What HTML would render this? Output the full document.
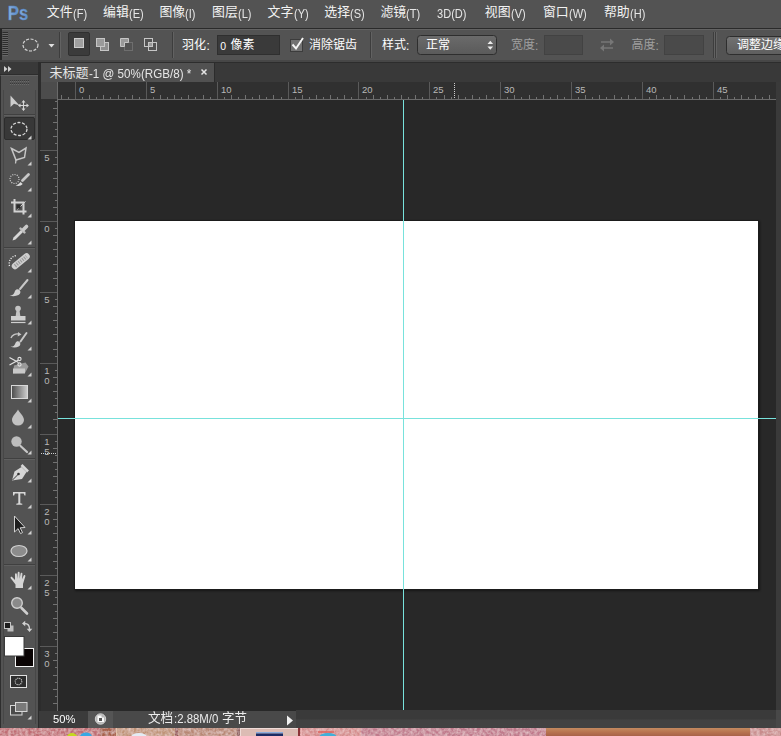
<!DOCTYPE html>
<html lang="zh-CN"><head><meta charset="utf-8"><title>Photoshop</title>
<style>
*{margin:0;padding:0;box-sizing:border-box}
html,body{width:781px;height:736px;overflow:hidden;background:#282828}
body{font-family:"Liberation Sans",sans-serif}
#app{position:relative;width:781px;height:736px;overflow:hidden;background:#282828}
.abs,.g,.a,.b{position:absolute}
.g{overflow:visible}
.a{white-space:nowrap;line-height:1;font-family:"Liberation Sans",sans-serif}
.a.cj{font-family:"Liberation Sans","Noto Sans CJK SC",sans-serif}
.rl text{font-family:"Liberation Sans",sans-serif;font-size:9.5px;fill:#b8b8b8}

</style></head>
<body>
<div id="app">
<!-- menu bar -->
<div class="b" style="left:0;top:0;width:781px;height:28px;background:#535353"></div>
<div class="b" style="left:0;top:28px;width:781px;height:1px;background:#2a2a2a"></div>
<!-- options bar -->
<div class="b" style="left:0;top:29px;width:781px;height:31px;background:#535353;border-top:1px solid #636363"></div>
<div class="b" style="left:0;top:29px;width:2px;height:31px;background:#262626"></div>
<div class="b" style="left:0;top:60px;width:781px;height:2px;background:#474747"></div>
<!-- tab bar -->
<div class="b" style="left:0;top:62px;width:781px;height:20px;background:#393939;border-top:1px solid #2d2d2d"></div>
<div class="b" style="left:41px;top:63px;width:174px;height:19px;background:#515151;border-right:1px solid #2c2c2c"></div>
<!-- rulers -->
<div class="b" style="left:40px;top:82px;width:736px;height:18px;background:#303030;border-bottom:1px solid #6a6a6a"></div>
<div class="b" style="left:40px;top:82px;width:18px;height:629px;background:#303030;border-right:1px solid #6a6a6a"></div>
<div class="b" style="left:40px;top:82px;width:17px;height:17px;background:#4c4c4c"></div>
<!-- right scroll strip -->
<div class="b" style="left:776px;top:82px;width:5px;height:645px;background:#3a3a3a"></div>
<!-- document -->
<div class="b" style="left:75px;top:221px;width:683px;height:368px;background:#fff;box-shadow:0 0 0 1px #1b1b1b,1px 1px 2px 1px rgba(0,0,0,.45)"></div>
<!-- guides -->
<div class="b" style="left:403px;top:100px;width:1px;height:610px;background:#78e2dc"></div>
<div class="b" style="left:58px;top:418px;width:718px;height:1px;background:#78e2dc"></div>
<!-- toolbar -->
<div class="b" style="left:0;top:62px;width:41px;height:666px;background:#2c2c2c"></div>
<div class="b" style="left:0;top:62px;width:38px;height:13px;background:#393939;border-bottom:1px solid #2d2d2d"></div>
<div class="b" style="left:0;top:75px;width:38px;height:653px;background:#535353;border-left:1px solid #2e2e2e;border-top:1px solid #606060"></div>
<!-- status bar -->
<div class="b" style="left:39px;top:711px;width:742px;height:17px;background:#3b3b3b"></div>
<div class="b" style="left:296px;top:710px;width:485px;height:18px;background:linear-gradient(#3a3a3a 0,#3a3a3a 50%,#424242 55%,#424242 100%)"></div>
<div class="b" style="left:88px;top:711px;width:25px;height:17px;background:#555"></div>
<div class="b" style="left:113px;top:711px;width:183px;height:17px;background:#494949"></div>
<div class="b" style="left:776px;top:710px;width:5px;height:18px;background:#484848"></div>
<!-- taskbar -->
<div class="b" style="left:0;top:728px;width:781px;height:8px;background:#b87878"></div>

<svg class="abs" style="left:0;top:0" width="781" height="100" viewBox="0 0 781 100"><g fill="#727272"><rect x="61" y="95" width="1" height="4"/><rect x="68" y="97" width="1" height="2"/><rect x="75" y="82" width="1" height="17" fill="#5a5a5a"/><rect x="82" y="97" width="1" height="2"/><rect x="89" y="95" width="1" height="4"/><rect x="96" y="97" width="1" height="2"/><rect x="103" y="95" width="1" height="4"/><rect x="110" y="97" width="1" height="2"/><rect x="118" y="95" width="1" height="4"/><rect x="125" y="97" width="1" height="2"/><rect x="132" y="95" width="1" height="4"/><rect x="139" y="97" width="1" height="2"/><rect x="146" y="82" width="1" height="17" fill="#5a5a5a"/><rect x="153" y="97" width="1" height="2"/><rect x="160" y="95" width="1" height="4"/><rect x="167" y="97" width="1" height="2"/><rect x="174" y="95" width="1" height="4"/><rect x="181" y="97" width="1" height="2"/><rect x="188" y="95" width="1" height="4"/><rect x="195" y="97" width="1" height="2"/><rect x="203" y="95" width="1" height="4"/><rect x="210" y="97" width="1" height="2"/><rect x="217" y="82" width="1" height="17" fill="#5a5a5a"/><rect x="224" y="97" width="1" height="2"/><rect x="231" y="95" width="1" height="4"/><rect x="238" y="97" width="1" height="2"/><rect x="245" y="95" width="1" height="4"/><rect x="252" y="97" width="1" height="2"/><rect x="259" y="95" width="1" height="4"/><rect x="266" y="97" width="1" height="2"/><rect x="273" y="95" width="1" height="4"/><rect x="281" y="97" width="1" height="2"/><rect x="288" y="82" width="1" height="17" fill="#5a5a5a"/><rect x="295" y="97" width="1" height="2"/><rect x="302" y="95" width="1" height="4"/><rect x="309" y="97" width="1" height="2"/><rect x="316" y="95" width="1" height="4"/><rect x="323" y="97" width="1" height="2"/><rect x="330" y="95" width="1" height="4"/><rect x="337" y="97" width="1" height="2"/><rect x="344" y="95" width="1" height="4"/><rect x="351" y="97" width="1" height="2"/><rect x="358" y="82" width="1" height="17" fill="#5a5a5a"/><rect x="366" y="97" width="1" height="2"/><rect x="373" y="95" width="1" height="4"/><rect x="380" y="97" width="1" height="2"/><rect x="387" y="95" width="1" height="4"/><rect x="394" y="97" width="1" height="2"/><rect x="401" y="95" width="1" height="4"/><rect x="408" y="97" width="1" height="2"/><rect x="415" y="95" width="1" height="4"/><rect x="422" y="97" width="1" height="2"/><rect x="429" y="82" width="1" height="17" fill="#5a5a5a"/><rect x="436" y="97" width="1" height="2"/><rect x="444" y="95" width="1" height="4"/><rect x="451" y="97" width="1" height="2"/><rect x="458" y="95" width="1" height="4"/><rect x="465" y="97" width="1" height="2"/><rect x="472" y="95" width="1" height="4"/><rect x="479" y="97" width="1" height="2"/><rect x="486" y="95" width="1" height="4"/><rect x="493" y="97" width="1" height="2"/><rect x="500" y="82" width="1" height="17" fill="#5a5a5a"/><rect x="507" y="97" width="1" height="2"/><rect x="514" y="95" width="1" height="4"/><rect x="521" y="97" width="1" height="2"/><rect x="529" y="95" width="1" height="4"/><rect x="536" y="97" width="1" height="2"/><rect x="543" y="95" width="1" height="4"/><rect x="550" y="97" width="1" height="2"/><rect x="557" y="95" width="1" height="4"/><rect x="564" y="97" width="1" height="2"/><rect x="571" y="82" width="1" height="17" fill="#5a5a5a"/><rect x="578" y="97" width="1" height="2"/><rect x="585" y="95" width="1" height="4"/><rect x="592" y="97" width="1" height="2"/><rect x="599" y="95" width="1" height="4"/><rect x="606" y="97" width="1" height="2"/><rect x="614" y="95" width="1" height="4"/><rect x="621" y="97" width="1" height="2"/><rect x="628" y="95" width="1" height="4"/><rect x="635" y="97" width="1" height="2"/><rect x="642" y="82" width="1" height="17" fill="#5a5a5a"/><rect x="649" y="97" width="1" height="2"/><rect x="656" y="95" width="1" height="4"/><rect x="663" y="97" width="1" height="2"/><rect x="670" y="95" width="1" height="4"/><rect x="677" y="97" width="1" height="2"/><rect x="684" y="95" width="1" height="4"/><rect x="692" y="97" width="1" height="2"/><rect x="699" y="95" width="1" height="4"/><rect x="706" y="97" width="1" height="2"/><rect x="713" y="82" width="1" height="17" fill="#5a5a5a"/><rect x="720" y="97" width="1" height="2"/><rect x="727" y="95" width="1" height="4"/><rect x="734" y="97" width="1" height="2"/><rect x="741" y="95" width="1" height="4"/><rect x="748" y="97" width="1" height="2"/><rect x="755" y="95" width="1" height="4"/><rect x="762" y="97" width="1" height="2"/><rect x="769" y="95" width="1" height="4"/><path d="M454.500 83v16" stroke="#d0d0d0" stroke-dasharray="1 1" fill="none"/></g><g class="rl"><text x="79" y="92.8">0</text><text x="150" y="92.8">5</text><text x="221" y="92.8">10</text><text x="292" y="92.8">15</text><text x="362" y="92.8">20</text><text x="433" y="92.8">25</text><text x="504" y="92.8">30</text><text x="575" y="92.8">35</text><text x="646" y="92.8">40</text><text x="717" y="92.8">45</text></g></svg><svg class="abs" style="left:0;top:0" width="60" height="710" viewBox="0 0 60 710"><g fill="#727272"><rect x="55" y="101" width="2" height="1"/><rect x="53" y="108" width="4" height="1"/><rect x="55" y="115" width="2" height="1"/><rect x="53" y="122" width="4" height="1"/><rect x="55" y="129" width="2" height="1"/><rect x="53" y="136" width="4" height="1"/><rect x="55" y="143" width="2" height="1"/><rect x="40" y="150" width="17" height="1" fill="#5a5a5a"/><rect x="55" y="157" width="2" height="1"/><rect x="53" y="164" width="4" height="1"/><rect x="55" y="171" width="2" height="1"/><rect x="53" y="178" width="4" height="1"/><rect x="55" y="186" width="2" height="1"/><rect x="53" y="193" width="4" height="1"/><rect x="55" y="200" width="2" height="1"/><rect x="53" y="207" width="4" height="1"/><rect x="55" y="214" width="2" height="1"/><rect x="40" y="221" width="17" height="1" fill="#5a5a5a"/><rect x="55" y="228" width="2" height="1"/><rect x="53" y="235" width="4" height="1"/><rect x="55" y="242" width="2" height="1"/><rect x="53" y="249" width="4" height="1"/><rect x="55" y="256" width="2" height="1"/><rect x="53" y="264" width="4" height="1"/><rect x="55" y="271" width="2" height="1"/><rect x="53" y="278" width="4" height="1"/><rect x="55" y="285" width="2" height="1"/><rect x="40" y="292" width="17" height="1" fill="#5a5a5a"/><rect x="55" y="299" width="2" height="1"/><rect x="53" y="306" width="4" height="1"/><rect x="55" y="313" width="2" height="1"/><rect x="53" y="320" width="4" height="1"/><rect x="55" y="327" width="2" height="1"/><rect x="53" y="334" width="4" height="1"/><rect x="55" y="341" width="2" height="1"/><rect x="53" y="349" width="4" height="1"/><rect x="55" y="356" width="2" height="1"/><rect x="40" y="363" width="17" height="1" fill="#5a5a5a"/><rect x="55" y="370" width="2" height="1"/><rect x="53" y="377" width="4" height="1"/><rect x="55" y="384" width="2" height="1"/><rect x="53" y="391" width="4" height="1"/><rect x="55" y="398" width="2" height="1"/><rect x="53" y="405" width="4" height="1"/><rect x="55" y="412" width="2" height="1"/><rect x="53" y="419" width="4" height="1"/><rect x="55" y="427" width="2" height="1"/><rect x="40" y="434" width="17" height="1" fill="#5a5a5a"/><rect x="55" y="441" width="2" height="1"/><rect x="53" y="448" width="4" height="1"/><rect x="55" y="455" width="2" height="1"/><rect x="53" y="462" width="4" height="1"/><rect x="55" y="469" width="2" height="1"/><rect x="53" y="476" width="4" height="1"/><rect x="55" y="483" width="2" height="1"/><rect x="53" y="490" width="4" height="1"/><rect x="55" y="497" width="2" height="1"/><rect x="40" y="504" width="17" height="1" fill="#5a5a5a"/><rect x="55" y="512" width="2" height="1"/><rect x="53" y="519" width="4" height="1"/><rect x="55" y="526" width="2" height="1"/><rect x="53" y="533" width="4" height="1"/><rect x="55" y="540" width="2" height="1"/><rect x="53" y="547" width="4" height="1"/><rect x="55" y="554" width="2" height="1"/><rect x="53" y="561" width="4" height="1"/><rect x="55" y="568" width="2" height="1"/><rect x="40" y="575" width="17" height="1" fill="#5a5a5a"/><rect x="55" y="582" width="2" height="1"/><rect x="53" y="590" width="4" height="1"/><rect x="55" y="597" width="2" height="1"/><rect x="53" y="604" width="4" height="1"/><rect x="55" y="611" width="2" height="1"/><rect x="53" y="618" width="4" height="1"/><rect x="55" y="625" width="2" height="1"/><rect x="53" y="632" width="4" height="1"/><rect x="55" y="639" width="2" height="1"/><rect x="40" y="646" width="17" height="1" fill="#5a5a5a"/><rect x="55" y="653" width="2" height="1"/><rect x="53" y="660" width="4" height="1"/><rect x="55" y="667" width="2" height="1"/><rect x="53" y="675" width="4" height="1"/><rect x="55" y="682" width="2" height="1"/><rect x="53" y="689" width="4" height="1"/><rect x="55" y="696" width="2" height="1"/><rect x="53" y="703" width="4" height="1"/><path d="M41 453.500h16" stroke="#d0d0d0" stroke-dasharray="1 1" fill="none"/></g><g class="rl"><text x="44.2" y="161">5</text><text x="44.2" y="232">0</text><text x="44.2" y="303">5</text><text x="44.2" y="374">1</text><text x="44.2" y="384">0</text><text x="44.2" y="445">1</text><text x="44.2" y="455">5</text><text x="44.2" y="515">2</text><text x="44.2" y="525">0</text><text x="44.2" y="586">2</text><text x="44.2" y="596">5</text><text x="44.2" y="657">3</text><text x="44.2" y="667">0</text></g></svg>
<svg class="abs" style="left:0;top:0" width="42" height="736" viewBox="0 0 42 736" fill="none">
<defs>
<linearGradient id="gr" x1="0" x2="1" y1="0" y2="0"><stop offset="0" stop-color="#4a4a4a"/><stop offset="1" stop-color="#cfcfcf"/></linearGradient>
</defs>
<!-- collapse arrows -->
<path d="M4 66l3.500 3L4 72zM8 66l3.500 3L8 72z" fill="#cfcfcf"/>
<!-- grip -->
<g stroke="#3a3a3a" stroke-width="1"><path d="M10 80.500h20M10 83.500h20" stroke-dasharray="1 1"/></g>
<g stroke="#6a6a6a" stroke-width="1"><path d="M10 81.500h20M10 84.500h20" stroke-dasharray="1 1"/></g>
<!-- separators -->
<g stroke="#404040"><path d="M4 114.500h31M4 247.500h31M4 458.500h31M4 564.500h31"/></g>
<g stroke="#5f5f5f"><path d="M4 115.500h31M4 248.500h31M4 459.500h31M4 565.500h31"/></g>
<path d="M3.500 90v634M35.500 90v634" stroke="#474747"/>
<!-- selected tool bg -->
<rect x="4.500" y="117.500" width="30" height="22" rx="1.500" fill="#383838" stroke="#2c2c2c"/>
<!-- flyout triangles -->
<g fill="#d0d0d0">
<path d="M31.500 135.500v4h-4z"/><path d="M31.500 161.500v4h-4z"/><path d="M31.500 187.500v4h-4z"/><path d="M31.500 213.500v4h-4z"/><path d="M31.500 240.500v4h-4z"/>
<path d="M31.500 268.500v4h-4z"/><path d="M31.500 294.500v4h-4z"/><path d="M31.500 320.500v4h-4z"/><path d="M31.500 346.500v4h-4z"/><path d="M31.500 372.500v4h-4z"/><path d="M31.500 398.500v4h-4z"/><path d="M31.500 424.500v4h-4z"/><path d="M31.500 450.500v4h-4z"/>
<path d="M31.500 478.500v4h-4z"/><path d="M31.500 504.500v4h-4z"/><path d="M31.500 530.500v4h-4z"/><path d="M31.500 557.500v4h-4z"/>
<path d="M31.500 585.500v4h-4z"/><path d="M31.500 715.500v4h-4z"/>
</g>
<!-- 1 move -->
<path d="M10.500 95.500v11.500l3.500-3.200 5.500 1.700z" fill="#cdcdcd"/>
<path d="M23.500 101.500v8M19.500 105.500h8" stroke="#d6d6d6" stroke-width="1.100"/>
<path d="M23.500 100l-2 2.500h4zM23.500 111l-2-2.500h4zM18 105.500l2.500-2v4zM29 105.500l-2.500-2v4z" fill="#d6d6d6"/>
<!-- 2 ellipse marquee -->
<ellipse cx="19" cy="129" rx="8" ry="6.500" stroke="#d8d8d8" stroke-width="1.300" stroke-dasharray="3 1.600"/>
<!-- 3 polygonal lasso -->
<path d="M11.500 148.500l7.500 4 7-4.500-1.500 9.500-8.500 2.500z" stroke="#c6c6c6" stroke-width="1.500" stroke-linejoin="miter"/>
<path d="M16 160l-.5 3.500" stroke="#c6c6c6" stroke-width="1.300"/>
<!-- 4 quick selection -->
<circle cx="14.500" cy="179" r="4.500" stroke="#d0d0d0" stroke-width="1.200" stroke-dasharray="1 1.300"/>
<path d="M28.500 174.500l-6 6" stroke="#c8c8c8" stroke-width="2.800" stroke-linecap="round"/>
<path d="M15.500 185.500c2-.3 3.600-1.600 5-3.500l2.200 2c-1.500 1.700-4 2.500-7.200 1.500z" fill="#dcdcdc"/>
<!-- 5 crop -->
<path d="M14.500 199v12.500h12M11 202.500h12.500v12" stroke="#d2d2d2" stroke-width="2"/>
<path d="M17.500 209.500l8-8" stroke="#cfcfcf" stroke-width="1"/>
<rect x="16.500" y="204.500" width="4" height="4" fill="#2c2c2c"/>
<!-- 6 eyedropper -->
<path d="M12.500 240.500l1-3 8-8 2 2-8 8z" fill="#d6d6d6"/>
<path d="M20.500 228.500l4 4" stroke="#bdbdbd" stroke-width="2.400" stroke-linecap="round"/>
<path d="M23.500 229.500l3-3" stroke="#c9c9c9" stroke-width="3.600" stroke-linecap="round"/>
<!-- 7 spot healing -->
<path d="M15 266l11.500-9.500" stroke="#cfcfcf" stroke-width="6.500" stroke-linecap="round"/>
<path d="M15 266l11.500-9.500" stroke="#9a9a9a" stroke-width="3.600" stroke-linecap="butt" stroke-dasharray="1.200 1.200"/>
<path d="M9.500 266c-1-4 .5-9 6.500-10.500" stroke="#f0f0f0" stroke-width="1.300" stroke-dasharray="1.200 1.300"/>
<!-- 8 brush -->
<path d="M27.500 280l-7.500 9" stroke="#c8c8c8" stroke-width="2" stroke-linecap="round"/>
<path d="M9.500 295.500c3 .2 4.500-1.300 5.500-4.500 1-2.200 3.500-2.200 4.700-.7 1.300 1.600.8 3.600-1.200 4.800-2.800 1.500-6.500 1.400-9 .4z" fill="#d0d0d0"/>
<!-- 9 stamp -->
<circle cx="18" cy="308.500" r="2.800" fill="#c4c4c4"/>
<path d="M16.500 310h3l.8 6h-4.600z" fill="#c4c4c4"/>
<rect x="11" y="316" width="14.500" height="4.500" fill="#cfcfcf"/>
<path d="M11 322.500h14.500" stroke="#cfcfcf" stroke-width="1.200"/>
<!-- 10 history brush -->
<path d="M26.500 333l-6 8.500" stroke="#c8c8c8" stroke-width="2" stroke-linecap="round"/>
<path d="M10.500 346.500c2.800.2 4.200-1 5-3.600.9-2 3.100-2 4.200-.7 1.200 1.500.7 3.300-1.100 4.300-2.500 1.300-5.800 1.100-8.100 0z" fill="#d0d0d0"/>
<path d="M11 338c1-3 4.500-5 8.500-3.800" stroke="#c6c6c6" stroke-width="1.400"/>
<path d="M18 332l3.500 2.500-3.800 2z" fill="#c6c6c6"/>
<!-- 11 background eraser -->
<path d="M14 365.500l11.500-3 3 4-3.500 6.500-12 .5z" fill="#9a9a9a"/>
<path d="M13 368.500h12v5h-12z" fill="#c8c8c8"/>
<path d="M9.500 357.500l9 5M9.500 365l9-5" stroke="#e2e2e2" stroke-width="1.300"/>
<circle cx="19.500" cy="359" r="1.600" stroke="#e2e2e2" stroke-width="1.100"/><circle cx="19.500" cy="364.500" r="1.600" stroke="#e2e2e2" stroke-width="1.100"/>
<!-- 12 gradient -->
<rect x="11.500" y="385.500" width="16" height="13" fill="url(#gr)" stroke="#d8d8d8"/>
<!-- 13 blur -->
<path d="M18 409.500c1.500 3.500 6 6.500 6 10.500a6 5.500 0 0 1-12 0c0-4 4.500-7 6-10.500z" fill="#c2c2c2"/>
<!-- 14 dodge -->
<circle cx="16.500" cy="441.500" r="5.200" fill="#bdbdbd"/>
<path d="M20.500 446l6.500 6" stroke="#c8c8c8" stroke-width="2.200" stroke-linecap="round"/>
<!-- 15 pen -->
<path d="M12 480.500l2.500-9 7-4.500 5 5-4.500 7z" fill="#d6d6d6"/>
<path d="M21.500 465l6.500 6.500" stroke="#d6d6d6" stroke-width="2.600"/>
<path d="M12.500 480l6-6" stroke="#3a3a3a" stroke-width="1"/><circle cx="18.500" cy="474" r="1.300" fill="#333"/>
<!-- 16 type -->
<path d="M13 492h12.500v3.500h-1l-.8-2h-3.400v9.700l2 .6v.9h-6v-.9l2-.6v-9.700h-3.400l-.8 2h-1.100z" fill="#d8d8d8"/>
<!-- 17 path selection -->
<path d="M14.500 516v16l3.600-3.400 2.400 5 2-1-2.300-4.800 4.800-.3z" fill="#1e1e1e" stroke="#d2d2d2" stroke-width="1" stroke-linejoin="round"/>
<!-- 18 ellipse -->
<ellipse cx="19" cy="551" rx="8" ry="5.500" fill="#8c8c8c" stroke="#d0d0d0" stroke-width="1.200"/>
<!-- 19 hand -->
<path d="M15.500 588v-3.500c-1.500-1.800-3-4-4.800-6.300-.6-1 .7-2 1.600-1l2.700 2.900v-5.800c0-1.300 1.800-1.300 1.900 0l.3 4.400.5-6c.1-1.300 1.900-1.200 1.900.1l.1 5.900.9-5.200c.2-1.200 1.900-1 1.800.3l-.4 5.500 1.600-3.600c.5-1.100 2-.5 1.700.7l-2.300 7.600v4z" fill="#d4d4d4"/>
<!-- 20 zoom -->
<circle cx="17" cy="603" r="5.300" fill="#8a8a8a" stroke="#cfcfcf" stroke-width="1.400"/>
<path d="M21.500 608l5.500 5.500" stroke="#cfcfcf" stroke-width="2.600" stroke-linecap="round"/>
<!-- default colors mini -->
<rect x="7.500" y="625.500" width="6" height="6" fill="#bdbdbd"/>
<rect x="4.500" y="622.500" width="6" height="6" fill="#1c1c1c" stroke="#c4c4c4"/>
<!-- swap -->
<path d="M24.500 623.500c3.500 0 5 1.500 5 5.500" stroke="#d0d0d0" stroke-width="1.300"/>
<path d="M22 623.500l3.200-2.800v5.600zM29.500 632l-2.800-3.200h5.600z" fill="#d0d0d0"/>
<!-- fg / bg -->
<rect x="15.500" y="648.500" width="18" height="18" fill="#0a0404" stroke="#f4f4f4"/>
<rect x="4.500" y="636.500" width="19.500" height="19.500" fill="#fff" stroke="#3a3a3a"/>
<!-- quick mask -->
<rect x="10.500" y="675.500" width="16" height="12" fill="#2e2e2e" stroke="#e0e0e0"/>
<circle cx="18.500" cy="681.500" r="3.300" stroke="#e6e6e6" stroke-width="1.100" stroke-dasharray="1 1"/>
<!-- screen mode -->
<rect x="10.500" y="705.500" width="11.500" height="9.500" fill="#4a4a4a" stroke="#d6d6d6"/>
<rect x="15.500" y="702.500" width="11.500" height="9" fill="#7a7a7a" stroke="#d6d6d6"/>
</svg>
<!-- options bar widgets -->
<svg class="abs" style="left:0;top:29px" width="781" height="33" viewBox="0 29 781 33" fill="none">
<defs>
<linearGradient id="sel" x1="0" x2="0" y1="0" y2="1"><stop offset="0" stop-color="#6b6b6b"/><stop offset="1" stop-color="#5a5a5a"/></linearGradient>
<linearGradient id="btn" x1="0" x2="0" y1="0" y2="1"><stop offset="0" stop-color="#727272"/><stop offset="1" stop-color="#5e5e5e"/></linearGradient>
</defs>
<!-- grip -->
<path d="M2.500 32.500h5.500M2.500 34.500h5.500M2.500 36.500h5.500M2.500 38.500h5.500M2.500 40.500h5.500M2.500 42.500h5.500M2.500 44.500h5.500M2.500 46.500h5.500M2.500 48.500h5.500M2.500 50.500h5.500M2.500 52.500h5.500M2.500 54.500h5.500" stroke="#2c2c2c"/>
<path d="M2.500 33.500h5.500M2.500 35.500h5.500M2.500 37.500h5.500M2.500 39.500h5.500M2.500 41.500h5.500M2.500 43.500h5.500M2.500 45.500h5.500M2.500 47.500h5.500M2.500 49.500h5.500M2.500 51.500h5.500M2.500 53.500h5.500M2.500 55.500h5.500" stroke="#676767"/>
<!-- tool preset: ellipse marquee + arrow -->
<ellipse cx="30.500" cy="45" rx="7.500" ry="6" stroke="#d2d2d2" stroke-width="1.200" stroke-dasharray="3 1.500"/>
<path d="M48.500 44h6l-3 3.500z" fill="#e0e0e0"/>
<!-- separators -->
<path d="M59.500 32v26M172.500 32v26M370.500 32v26M713.500 32v26" stroke="#3d3d3d"/>
<path d="M60.500 32v26M173.500 32v26M371.500 32v26M714.500 32v26M716.500 32v26" stroke="#626262"/>
<path d="M715.500 32v26" stroke="#3d3d3d"/>
<!-- mode buttons -->
<rect x="68.500" y="32.500" width="21" height="23" rx="1.500" fill="#3b3b3b" stroke="#303030"/>
<rect x="74.500" y="38.500" width="9" height="9" fill="#a0a0a0" stroke="#cdcdcd"/>
<rect x="100.500" y="42.500" width="8" height="8" fill="#8e8e8e" stroke="#c6c6c6"/>
<rect x="96.500" y="38.500" width="8" height="8" fill="#9a9a9a" stroke="#c6c6c6"/>
<rect x="124.500" y="42.500" width="8" height="8" stroke="#6e6e6e"/>
<path d="M120.500 46.500v-8h8v4h-4v4z" fill="#9a9a9a" stroke="#c6c6c6"/>
<rect x="144.500" y="38.500" width="8" height="8" stroke="#c6c6c6"/>
<rect x="148.500" y="42.500" width="8" height="8" stroke="#c6c6c6"/>
<rect x="149" y="43" width="3" height="3" fill="#9a9a9a"/>
<!-- feather input -->
<rect x="217.500" y="35.500" width="62" height="19" fill="#3a3a3a" stroke="#2f2f2f"/>
<!-- checkbox -->
<rect x="290.500" y="39.500" width="12" height="12" fill="#727272" stroke="#3c3c3c"/>
<path d="M292.500 44.500l3.500 4 7-10.500" stroke="#f6f6f6" stroke-width="1.900"/>
<!-- style select -->
<rect x="417.500" y="35.500" width="79" height="19" rx="3" fill="url(#sel)" stroke="#2e2e2e"/>
<path d="M487.500 44l2.800-3.200 2.800 3.200zM487.500 46.500l2.800 3.200 2.800-3.200z" fill="#ececec"/>
<!-- width/height inputs (disabled) -->
<rect x="544.500" y="35.500" width="38" height="19" fill="#4a4a4a" stroke="#424242"/>
<rect x="664.500" y="35.500" width="39" height="19" fill="#4a4a4a" stroke="#424242"/>
<!-- swap -->
<path d="M601 42h10M603 48h10" stroke="#777" stroke-width="1.300"/>
<path d="M610 38.500l4 3.500-4 3.500zM604 44.500l-4 3.500 4 3.500z" fill="#777"/>
<!-- refine edge button -->
<rect x="726.500" y="36.500" width="70" height="18" rx="3" fill="url(#btn)" stroke="#2e2e2e"/>
</svg>
<!-- tab close -->
<svg class="abs" style="left:199px;top:67px" width="10" height="10" viewBox="0 0 10 10"><path d="M2.500 2.500l5 5M7.500 2.500l-5 5" stroke="#e4e4e4" stroke-width="1.500"/></svg>
<!-- status bar extras -->
<svg class="abs" style="left:41px;top:710px" width="740" height="18" viewBox="41 710 740 18" fill="none">
<circle cx="100.500" cy="719" r="5.200" fill="#b8b8b8" stroke="#d0d0d0"/>
<path d="M97.500 715.500h4v2h2.500v4.500h-6.500z" fill="#fafafa"/><rect x="99" y="718" width="3" height="3" fill="#555"/>
<path d="M287 715.500l6 5-6 5z" fill="#f0f0f0"/>
</svg>
<!-- Ps logo -->
<svg class="abs" style="left:0;top:0" width="40" height="28" viewBox="0 0 40 28"><defs><linearGradient id="psg" x1="0" x2="1" y1="0" y2="0"><stop offset="0" stop-color="#8db3e0"/><stop offset=".45" stop-color="#5f8fca"/><stop offset=".55" stop-color="#86aedd"/><stop offset="1" stop-color="#5b8cc8"/></linearGradient></defs>
<text x="0" y="0" transform="translate(7.700 20) scale(.8 1)" font-family="Liberation Sans, sans-serif" font-weight="bold" font-size="21" fill="url(#psg)" stroke="#5582bd" stroke-width=".3">Ps</text></svg>
<!-- desktop taskbar strip -->
<svg class="abs" style="left:0;top:728px" width="781" height="8" viewBox="0 728 781 8">
<defs>
<linearGradient id="wood" x1="0" x2="0" y1="0" y2="1"><stop offset="0" stop-color="#c48a60"/><stop offset=".5" stop-color="#b87450"/><stop offset="1" stop-color="#a86248"/></linearGradient>
<filter id="nz" x="0" y="0" width="100%" height="100%"><feTurbulence type="fractalNoise" baseFrequency=".35" numOctaves="2" seed="4" result="t"/><feColorMatrix in="t" type="matrix" values="0 0 0 0 1  0 0 0 0 .85  0 0 0 0 .85  .9 0 0 0 -.28"/><feComposite in2="SourceGraphic" operator="in"/><feMerge><feMergeNode in="SourceGraphic"/><feMergeNode/></feMerge></filter>
</defs>
<g filter="url(#nz)">
<rect x="0" y="728" width="100" height="8" fill="#c06e74"/>
<rect x="100" y="728" width="16" height="8" fill="#a8624c"/>
<rect x="116" y="728" width="59" height="8" fill="#c09478"/>
<rect x="175" y="728" width="3" height="8" fill="#8c3c3a"/>
<rect x="178" y="728" width="59" height="8" fill="#b88874"/>
<rect x="237" y="728" width="3" height="8" fill="#7c3430"/>
<rect x="300" y="728" width="61" height="8" fill="#d48c8c"/>
<rect x="361" y="728" width="185" height="8" fill="#c07a8c"/>
<rect x="750" y="728" width="31" height="8" fill="#c88c8c"/>
</g>
<rect x="240" y="728" width="58" height="8" fill="#dcbcb4"/>
<rect x="240" y="728" width="58" height="1" fill="#f0dcd8"/><rect x="240" y="728" width="1" height="8" fill="#f0dcd8"/>
<rect x="298" y="728" width="2" height="8" fill="#8c3438"/>
<rect x="301" y="728" width="1" height="8" fill="#ecb4b4"/>
<rect x="116" y="728" width="1" height="8" fill="#e4c4ac"/>
<rect x="546" y="728" width="204" height="8" fill="url(#wood)"/>
<rect x="256" y="732" width="27" height="1.500" fill="#8cacdc"/>
<rect x="256" y="733.500" width="27" height="3" fill="#1c2c64"/>
<ellipse cx="72" cy="737" rx="5" ry="4" fill="#c4d820"/>
<ellipse cx="86" cy="737" rx="6" ry="4.500" fill="#38a8e4"/>
<ellipse cx="139" cy="737.500" rx="8" ry="4.500" fill="#e4ecf4"/>
<ellipse cx="328" cy="737.500" rx="9" ry="4.500" fill="#40b0d8"/>
<rect x="318" y="731" width="16" height="2" fill="#e06058" opacity=".7"/>
</svg>

<span class="a cj" style="left:46.8px;top:6px;font-size:12.9px;color:#f2f2f2;">文件</span><span class="a" style="left:72.8px;top:7.20px;font-size:13px;color:#e6e6e6;transform:scaleX(.85);transform-origin:0 0">(F)</span><span class="a cj" style="left:103.1px;top:6px;font-size:12.9px;color:#f2f2f2;">编辑</span><span class="a" style="left:129.1px;top:7.20px;font-size:13px;color:#e6e6e6;transform:scaleX(.85);transform-origin:0 0">(E)</span><span class="a cj" style="left:159.4px;top:6px;font-size:12.9px;color:#f2f2f2;">图像</span><span class="a" style="left:185.4px;top:7.20px;font-size:13px;color:#e6e6e6;transform:scaleX(.85);transform-origin:0 0">(I)</span><span class="a cj" style="left:212.1px;top:6px;font-size:12.9px;color:#f2f2f2;">图层</span><span class="a" style="left:238.1px;top:7.20px;font-size:13px;color:#e6e6e6;transform:scaleX(.85);transform-origin:0 0">(L)</span><span class="a cj" style="left:267.6px;top:6px;font-size:12.9px;color:#f2f2f2;">文字</span><span class="a" style="left:293.6px;top:7.20px;font-size:13px;color:#e6e6e6;transform:scaleX(.85);transform-origin:0 0">(Y)</span><span class="a cj" style="left:324.3px;top:6px;font-size:12.9px;color:#f2f2f2;">选择</span><span class="a" style="left:350.3px;top:7.20px;font-size:13px;color:#e6e6e6;transform:scaleX(.85);transform-origin:0 0">(S)</span><span class="a cj" style="left:380.4px;top:6px;font-size:12.9px;color:#f2f2f2;">滤镜</span><span class="a" style="left:406.4px;top:7.20px;font-size:13px;color:#e6e6e6;transform:scaleX(.85);transform-origin:0 0">(T)</span><span class="a" style="left:436.9px;top:7.20px;font-size:13px;color:#e6e6e6;transform:scaleX(.85);transform-origin:0 0">3D(D)</span><span class="a cj" style="left:484.8px;top:6px;font-size:12.9px;color:#f2f2f2;">视图</span><span class="a" style="left:510.8px;top:7.20px;font-size:13px;color:#e6e6e6;transform:scaleX(.85);transform-origin:0 0">(V)</span><span class="a cj" style="left:542.9px;top:6px;font-size:12.9px;color:#f2f2f2;">窗口</span><span class="a" style="left:568.9px;top:7.20px;font-size:13px;color:#e6e6e6;transform:scaleX(.85);transform-origin:0 0">(W)</span><span class="a cj" style="left:603.9px;top:6px;font-size:12.9px;color:#f2f2f2;">帮助</span><span class="a" style="left:629.9px;top:7.20px;font-size:13px;color:#e6e6e6;transform:scaleX(.85);transform-origin:0 0">(H)</span><span class="a cj" style="left:182px;top:38.7px;font-size:12px;color:#ffffff;">羽化</span><span class="a" style="left:206.5px;top:39.74px;font-size:12px;color:#ffffff;">:</span><span class="a" style="left:220.3px;top:41.41px;font-size:10.5px;color:#ffffff;">0</span><span class="a cj" style="left:230.5px;top:38.7px;font-size:12px;color:#ffffff;">像素</span><span class="a cj" style="left:309px;top:38.7px;font-size:12px;color:#ffffff;">消除锯齿</span><span class="a cj" style="left:382px;top:38.7px;font-size:12px;color:#ffffff;">样式</span><span class="a" style="left:406px;top:39.74px;font-size:12px;color:#ffffff;">:</span><span class="a cj" style="left:426px;top:38.7px;font-size:12px;color:#ffffff;">正常</span><span class="a cj" style="left:511px;top:38.7px;font-size:12px;color:#a0a0a0;">宽度</span><span class="a" style="left:535px;top:39.74px;font-size:12px;color:#a0a0a0;">:</span><span class="a cj" style="left:631.5px;top:38.7px;font-size:12px;color:#a0a0a0;">高度</span><span class="a" style="left:655.5px;top:39.74px;font-size:12px;color:#a0a0a0;">:</span><span class="a cj" style="left:737px;top:38.7px;font-size:12px;color:#ffffff;">调整边缘</span><span class="a cj" style="left:49.5px;top:66px;font-size:13px;color:#e6e6e6;">未标题</span><span class="a" style="left:88.8px;top:67.20px;font-size:13px;color:#e6e6e6;transform:scaleX(.895);transform-origin:0 0">-1 @ 50%(RGB/8) *</span><span class="a" style="left:53px;top:713.97px;font-size:11.5px;color:#ffffff;transform:scaleX(.97);transform-origin:0 0">50%</span><span class="a cj" style="left:148.3px;top:711.1px;font-size:13px;color:#ececec;transform:scaleX(.97);transform-origin:0 0">文档</span><span class="a" style="left:174px;top:712.94px;font-size:12px;color:#ececec;transform:scaleX(.95);transform-origin:0 0">:2.88M/0</span><span class="a cj" style="left:221.5px;top:711.1px;font-size:13px;color:#ececec;transform:scaleX(.954);transform-origin:0 0">字节</span>
</div>
</body></html>
